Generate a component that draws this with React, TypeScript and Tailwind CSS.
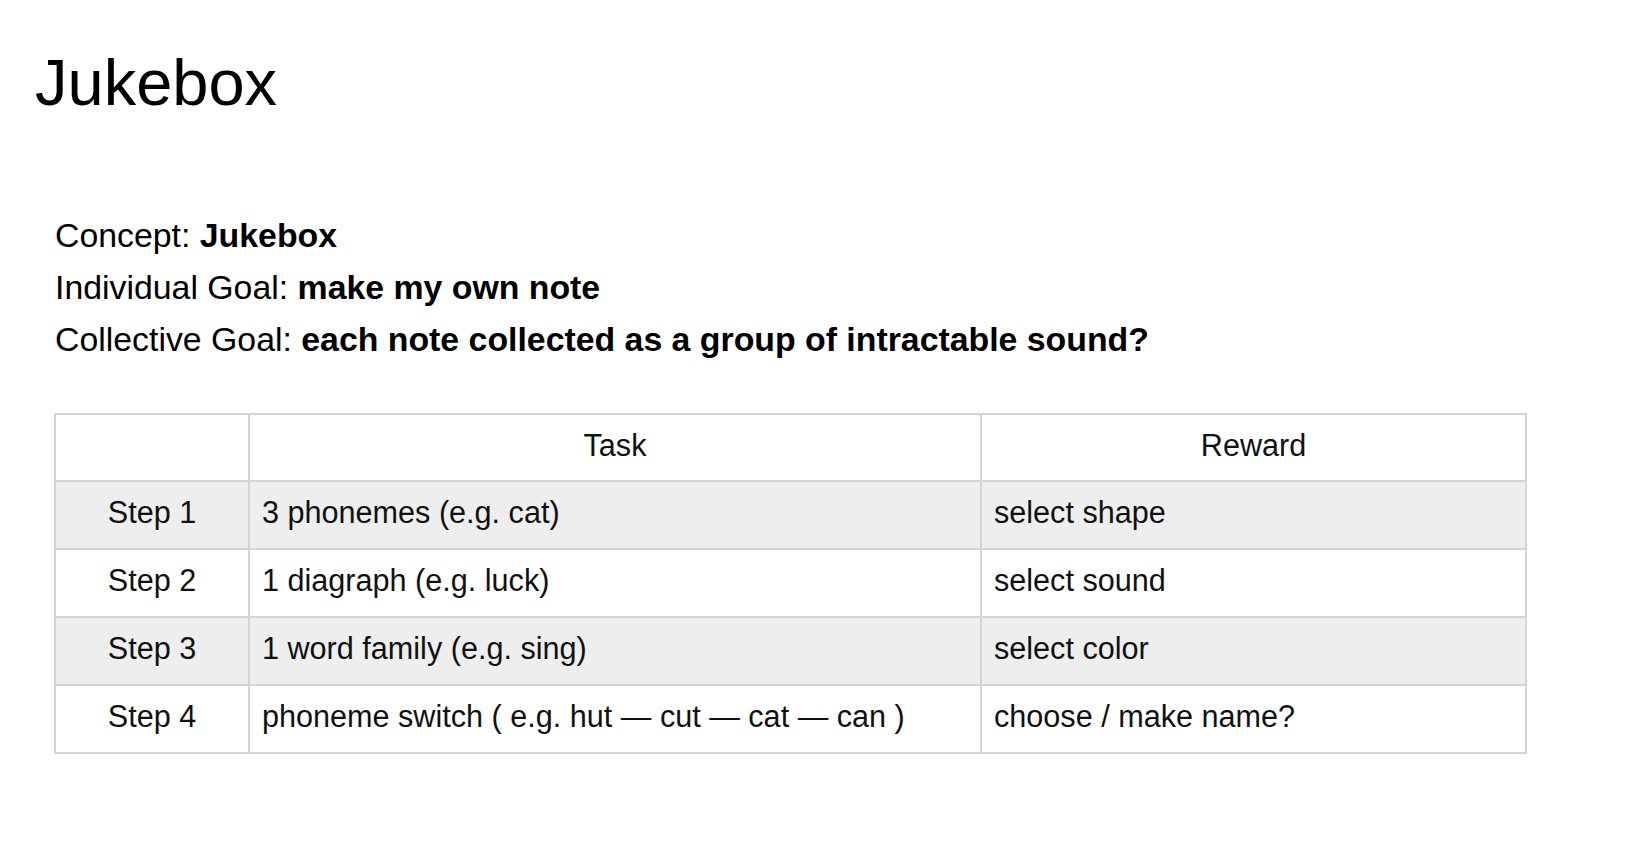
import React from "react";

const rows = [
  { step: "Step 1", task: "3 phonemes (e.g. cat)", reward: "select shape", gray: true },
  { step: "Step 2", task: "1 diagraph (e.g. luck)", reward: "select sound", gray: false },
  { step: "Step 3", task: "1 word family (e.g. sing)", reward: "select color", gray: true },
  { step: "Step 4", task: "phoneme switch ( e.g. hut \u2014 cut \u2014 cat \u2014 can )", reward: "choose / make name?", gray: false },
];

export default function App() {
  return (
    <div className="min-h-screen w-full bg-white text-black font-['Liberation_Sans',Arial,Helvetica,sans-serif]">
      <div className="pl-[35px] pt-[50px]">
        <h1 className="w-fit text-[65px] font-normal leading-none">Jukebox</h1>
      </div>

      <div className="mt-[95px] pl-[55px] text-[33px] leading-[52px]">
        <p className="w-fit origin-left scale-x-[1.025] whitespace-nowrap">
          Concept: <span className="font-bold">Jukebox</span>
        </p>
        <p className="w-fit origin-left scale-x-[1.025] whitespace-nowrap">
          Individual Goal: <span className="font-bold">make my own note</span>
        </p>
        <p className="w-fit origin-left scale-x-[1.025] whitespace-nowrap">
          Collective Goal: <span className="font-bold">each note collected as a group of intractable sound?</span>
        </p>
      </div>

      <div className="mt-[47px] pl-[54px]">
        <table className="w-[1471px] table-fixed border-collapse text-[30.6px] text-[#111]">
          <colgroup>
            <col className="w-[194px]" />
            <col className="w-[732px]" />
            <col className="w-[545px]" />
          </colgroup>
          <thead>
            <tr className="h-[67px] bg-white">
              <th className="border-2 border-[#d4d4d4] pb-[4px] font-normal"></th>
              <th className="border-2 border-[#d4d4d4] pb-[4px] text-center font-normal">Task</th>
              <th className="border-2 border-[#d4d4d4] pb-[4px] text-center font-normal">Reward</th>
            </tr>
          </thead>
          <tbody>
            {rows.map((r) => (
              <tr key={r.step} className={r.gray ? "h-[68px] bg-[#eeeeee]" : "h-[68px] bg-white"}>
                <td className="border-2 border-[#d4d4d4] pb-[4px] text-center align-middle">{r.step}</td>
                <td className="border-2 border-[#d4d4d4] pb-[4px] pl-[12px] align-middle whitespace-nowrap">{r.task}</td>
                <td className="border-2 border-[#d4d4d4] pb-[4px] pl-[12px] align-middle whitespace-nowrap">{r.reward}</td>
              </tr>
            ))}
          </tbody>
        </table>
      </div>
    </div>
  );
}
